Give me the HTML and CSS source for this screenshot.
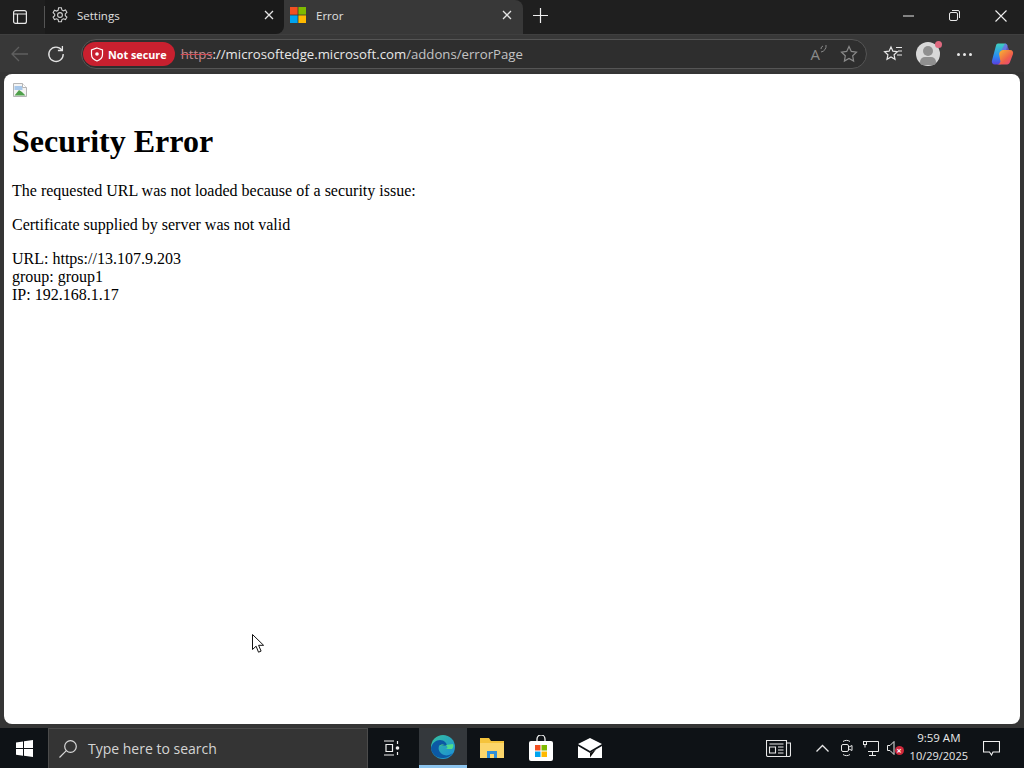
FILE: index.html
```html
<!DOCTYPE html>
<html lang="en">
<head>
  <meta charset="UTF-8" />
  <title>Error</title>
  <link rel="stylesheet" href="styles.css">
</head>
<body>
  <div class="tabbar">
    <div class="tabs-btn">
      <svg width="16" height="16" viewBox="0 0 16 16" fill="none" stroke="#e8e8e8" stroke-width="1.2"><rect x="1.6" y="1.6" width="12.8" height="12.8" rx="2"/><path d="M1.6 5h12.8M5.5 5v9.4"/></svg>
    </div>
    <div class="tab-sep"></div>
    <div class="tab tab-idle">
      <svg width="18" height="18" viewBox="0 0 18 18" fill="none" stroke="#d0d0d0" stroke-width="1.1"><path d="M7.6 1.8h2.8l.5 2.2 1.5.8 2.1-.8 1.4 2.4-1.6 1.5v1.8l1.6 1.5-1.4 2.4-2.1-.8-1.5.8-.5 2.2H7.6l-.5-2.2-1.5-.8-2.1.8-1.4-2.4 1.6-1.5V8.200L2.100 6.700 3.500 4.300l2.100.8 1.500-.8z"/><circle cx="9" cy="9" r="2.4"/></svg>
      <span class="tab-title">Settings</span>
      <svg class="tab-close" width="10" height="10" viewBox="0 0 10 10" stroke="#e4e4e4" stroke-width="1.3"><path d="M1 1l8 8M9 1l-8 8"/></svg>
    </div>
    <div class="tab tab-active">
      <svg width="16" height="16" viewBox="0 0 16 16"><rect width="7.600" height="7.600" fill="#f25022"/><rect x="8.400" width="7.600" height="7.600" fill="#7fba00"/><rect y="8.400" width="7.600" height="7.600" fill="#00a4ef"/><rect x="8.400" y="8.400" width="7.600" height="7.600" fill="#ffb900"/></svg>
      <span class="tab-title">Error</span>
      <svg class="tab-close" width="10" height="10" viewBox="0 0 10 10" stroke="#e4e4e4" stroke-width="1.3"><path d="M1 1l8 8M9 1l-8 8"/></svg>
    </div>
    <div class="new-tab">
      <svg width="15" height="15" viewBox="0 0 15 15" stroke="#efefef" stroke-width="1.200"><path d="M7.500 0v15M0 7.500h15"/></svg>
    </div>
    <div class="win-btns">
      <svg width="11" height="11" viewBox="0 0 11 11" stroke="#e8e8e8"><path d="M0 6h11"/></svg>
      <svg width="11" height="11" viewBox="0 0 11 11" fill="none" stroke="#e8e8e8"><rect x=".5" y="2.500" width="8" height="8" rx="1.500"/><path d="M3 .5h6a1.500 1.500 0 0 1 1.500 1.500v6"/></svg>
      <svg width="12" height="12" viewBox="0 0 12 12" stroke="#efefef" stroke-width="1.100"><path d="M.5.500l11 11M11.500.500l-11 11"/></svg>
    </div>
  </div>

  <div class="toolbar">
    <svg class="nav-back" width="18" height="16" viewBox="0 0 18 16" fill="none" stroke="#5f5f5f" stroke-width="1.300"><path d="M17 8H1M8 1L1 8l7 7"/></svg>
    <svg class="nav-reload" width="18" height="18" viewBox="0 0 18 18" fill="none" stroke="#e4e4e4" stroke-width="1.300"><path d="M14.800 5A7.200 7.200 0 1 0 16.200 9"/><path d="M15.400 1v4.500h-4.500"/></svg>
    <div class="addressbar">
      <div class="not-secure">
        <svg width="14" height="15" viewBox="0 0 14 15" fill="none" stroke="#fff" stroke-width="1.200"><path d="M7 1l5.500 2v4.500c0 3-2.300 5.300-5.500 6.500-3.200-1.200-5.500-3.500-5.500-6.500V3z"/><circle cx="7" cy="7" r="1.800" fill="#fff" stroke="none"/></svg>
        <span>Not secure</span>
      </div>
      <div class="url"><span class="url-https">https</span>://microsoftedge.microsoft.com<span class="url-path">/addons/errorPage</span></div>
      <span class="read-aloud">A<svg width="8" height="9" viewBox="0 0 8 9" fill="none" stroke="#8a8a8a"><path d="M1 5a3 3 0 0 1 2-3M1 8a6 6 0 0 0 5-7"/></svg></span>
      <svg width="18" height="18" viewBox="0 0 18 18" fill="none" stroke="#8a8a8a" stroke-width="1.200"><path d="M9 1.500l2.300 4.900 5.200.7-3.800 3.700.9 5.300L9 13.500l-4.600 2.600.9-5.300L1.500 7.100l5.200-.7z"/></svg>
    </div>
    <svg class="tool-fav" width="20" height="18" viewBox="0 0 20 18" fill="none" stroke="#e8e8e8" stroke-width="1.200"><path d="M8 2l1.900 4.200 4.500.5-3.300 3.100.9 4.500L8 12l-4 2.300.9-4.500L1.600 6.700l4.500-.5z"/><path d="M13 2.500h6M15 6h4M14 10h5"/></svg>
    <div class="avatar">
      <span class="avatar-head"></span>
      <span class="avatar-body"></span>
      <span class="avatar-dot"></span>
    </div>
    <div class="more-dots"><span></span><span></span><span></span></div>
    <svg class="copilot" width="24" height="24" viewBox="0 0 24 24"><defs><linearGradient id="cpA" x1="0" y1="0" x2="0" y2="1"><stop offset="0" stop-color="#3fd0c0"/><stop offset=".6" stop-color="#2a8cf0"/><stop offset="1" stop-color="#5a3fe0"/></linearGradient><linearGradient id="cpB" x1="0" y1="0" x2="1" y2="1"><stop offset="0" stop-color="#f9c22e"/><stop offset=".6" stop-color="#f0604a"/><stop offset="1" stop-color="#e0408a"/></linearGradient></defs><path d="M8 1.500h7c1.500 0 2 1 2.400 2L13 20c-.4 1.300-1.500 2.500-2.800 2.500H5c-2.500 0-3.700-2-3-4L6 3.500c.3-1.200 1-2 2-2z" fill="url(#cpA)"/><path d="M9 12c1-3 2-4 4-4h7c2.500 0 3.500 2 3 4l-3 8c-.5 1.300-1.500 2.500-3 2.500H7c2 0 3-1 3.500-3z" fill="url(#cpB)"/><path d="M15 1.500c1.500 0 2 1 2.400 2L19 8h-6c-1 0-2 .5-2.500 2z" fill="#7a5fe8" opacity=".7"/></svg>
  </div>

  <main class="page">
    <span class="broken-img">
      <svg width="16" height="16" viewBox="0 0 16 16"><path d="M1.500 1.500h9l4 4v9h-13z" fill="#f4f4f4" stroke="#b5b5b5"/><path d="M2.500 4h8v4h-8z" fill="#a8c8ea"/><path d="M2.500 13.500L7 8l3 2 3.500 3.500z" fill="#4fa04a"/><path d="M10.500 1.500v4h4" fill="#fff" stroke="#b5b5b5"/></svg>
    </span>
    <h1>Security Error</h1>
    <p>The requested URL was not loaded because of a security issue:</p>
    <p>Certificate supplied by server was not valid</p>
    <p>URL: https://13.107.9.203<br>group: group1<br>IP: 192.168.1.17</p>
    <svg class="cursor" width="13" height="20" viewBox="0 0 13 20"><path d="M.5.500v15l3.600-3.300 2.400 6 2.600-1.100-2.500-5.800h5z" fill="#fff" stroke="#111"/></svg>
  </main>

  <div class="taskbar">
    <div class="start">
      <svg width="17" height="17" viewBox="0 0 17 17" fill="#fff"><path d="M0 2.400l7-1v6.700H0zM8 1.300L17 0v8.100H8zM0 9h7v6.700l-7-1zM8 9h9v8l-9-1.300z"/></svg>
    </div>
    <div class="search">
      <svg width="20" height="20" viewBox="0 0 20 20" fill="none" stroke="#d8d8d8" stroke-width="1.200"><circle cx="12.500" cy="7.500" r="5.800"/><path d="M8.300 11.700L1.500 18.500"/></svg>
      <span>Type here to search</span>
    </div>
    <div class="task-item task-view">
      <svg width="18" height="16" viewBox="0 0 18 16" fill="none" stroke="#f0f0f0" stroke-width="1.200"><path d="M1 1h10M1 15h10M3 4.500h6.500v7H3zM14.500 1v3M14.500 12v3"/><circle cx="14.500" cy="8" r="1.800" fill="#f0f0f0" stroke="none"/></svg>
    </div>
    <div class="task-item task-active">
      <svg width="26" height="26" viewBox="0 0 26 26"><defs><linearGradient id="edA" x1="0" y1="0" x2="1" y2="1"><stop offset="0" stop-color="#35c1a0"/><stop offset="1" stop-color="#1b8bd8"/></linearGradient></defs><circle cx="13" cy="13" r="12" fill="url(#edA)"/><path d="M1 14c1-5 5-8 9-8s7 3 7 6H9c-1 3 0 7 5 9 3 1 6 0 9-2-3 4-7 5-11 5-6 0-11-5-11-10z" fill="#0c59a4"/><path d="M9 12c2-2 5-2 8 0 1 2 0 3-2 3h7c1-1 2-3 1-5" fill="#4fdc8c"/></svg>
    </div>
    <div class="task-item">
      <svg width="24" height="20" viewBox="0 0 24 20"><path d="M0 0h9l2 3h13v17H0z" fill="#f5c33b"/><path d="M0 5h24v15H0z" fill="#fbd56a"/><path d="M7 20v-7h10v7h-3v-4h-4v4z" fill="#2f8ed8"/></svg>
    </div>
    <div class="task-item">
      <svg width="24" height="26" viewBox="0 0 24 26"><path d="M8 7V4a4 4 0 0 1 8 0v3" fill="none" stroke="#fff" stroke-width="1.200"/><rect y="6" width="24" height="20" rx="2" fill="#fff"/><rect x="6" y="10" width="5.500" height="5.500" fill="#f25022"/><rect x="12.500" y="10" width="5.500" height="5.500" fill="#7fba00"/><rect x="6" y="16.500" width="5.500" height="5.500" fill="#00a4ef"/><rect x="12.500" y="16.500" width="5.500" height="5.500" fill="#ffb900"/></svg>
    </div>
    <div class="task-item">
      <svg width="24" height="20" viewBox="0 0 24 20"><path d="M0 6l12-6 12 6-12 7z" fill="#fff"/><path d="M0 8l12 7 12-7v12H0z" fill="#fff"/><path d="M12 15l6-3.500-6 8z" fill="#111"/></svg>
    </div>
    <div class="tray">
      <svg class="tray-news" width="25" height="17" viewBox="0 0 25 17" fill="none" stroke="#e8e8e8" stroke-width="1.100"><path d="M.5.500h20v16H2a1.500 1.500 0 0 1-1.500-1.500zM20.500 3h4v12a1.500 1.500 0 0 1-1.500 1.500h-2.500"/><path d="M3.500 4h14M3.500 7h6v6h-6zM12 7h5.500M12 10h5.500M12 13h5.500"/></svg>
      <svg class="tray-up" width="13" height="8" viewBox="0 0 13 8" fill="none" stroke="#e8e8e8" stroke-width="1.300"><path d="M.5 7.500l6-6 6 6"/></svg>
      <svg class="tray-cam" width="12" height="18" viewBox="0 0 12 18" fill="none" stroke="#e8e8e8"><rect x=".5" y="5.500" width="7" height="7" rx="1.500"/><path d="M8 8l3-1.500v5L8 10M2 2.500c2-1.500 5-1.500 7 0M2 15.500c2 1.500 5 1.500 7 0"/></svg>
      <svg width="16" height="16" viewBox="0 0 16 16" fill="none" stroke="#e8e8e8"><path d="M3.500 1.500h12v10H5M9.500 11.500v3.500M6 15.500h7"/><rect x=".5" y="1.500" width="3" height="3"/><path d="M2 4.500v3"/></svg>
      <span class="tray-volume">
        <svg width="9" height="14" viewBox="0 0 9 14" fill="none" stroke="#e8e8e8"><path d="M.5 4.500h2.500l4-4v13l-4-4H.5z"/></svg>
        <span class="mute-badge">×</span>
      </span>
      <div class="clock"><span class="clock-time">9:59 AM</span><span>10/29/2025</span></div>
      <svg class="tray-note" width="17" height="15" viewBox="0 0 17 15" fill="none" stroke="#f0f0f0" stroke-width="1.100"><path d="M.5.500h16v10.500h-6.500L8.500 14l-2-3H.5z"/></svg>
    </div>
  </div>
</body>
</html>
```

FILE: styles.css
```css
html, body {
  margin: 0;
  padding: 0;
}
body {
  width: 1024px;
  height: 768px;
  overflow: hidden;
  background-color: #353535;
  font-family: "Open Sans", "Noto Sans", sans-serif;
  display: flex;
  flex-direction: column;
}
svg {
  display: block;
  flex-shrink: 0;
}

/* tab strip */
.tabbar {
  height: 34px;
  background-color: #1f1f1f;
  display: flex;
  align-items: center;
  border-bottom: 1px solid #3f3f3f;
}
.tabs-btn {
  width: 40px;
  display: flex;
  justify-content: center;
}
.tab-sep {
  width: 1px;
  height: 22px;
  background-color: #555;
  margin-left: 4px;
}
.tab {
  height: 34px;
  box-sizing: border-box;
  display: flex;
  align-items: center;
  font-size: 11.5px;
  color: #e0e0e0;
  padding-bottom: 4px;
}
.tab-idle {
  position: relative;
  z-index: 1;
  width: 239px;
  padding-left: 6px;
  padding-right: 10px;
  background-color: #1a1a1a;
  border-bottom-right-radius: 8px;
}
.tab-active {
  width: 247px;
  margin-left: -8px;
  background-color: #383838;
  border-radius: 8px 8px 0 0;
  padding-left: 14px;
  padding-right: 11px;
}
.tab-title {
  margin-left: 8px;
  flex: 1;
}
.tab-active .tab-title {
  margin-left: 10px;
}
.new-tab {
  margin-left: 10px;
  margin-top: -3px;
}
.win-btns {
  margin-left: auto;
  display: flex;
  align-items: center;
  gap: 35px;
  padding: 0 17px 3px 0;
}

/* address row */
.toolbar {
  height: 37px;
  box-sizing: border-box;
  padding-top: 1px;
  background-color: #383838;
  display: flex;
  align-items: center;
}
.nav-back {
  margin-left: 11px;
}
.nav-reload {
  margin-left: 18px;
}
.addressbar {
  margin-left: 16px;
  width: 786px;
  height: 30px;
  box-sizing: border-box;
  border: 1px solid #555;
  border-radius: 15px;
  background-color: #2e2e2e;
  display: flex;
  align-items: center;
  padding-right: 8px;
}
.not-secure {
  height: 24px;
  margin-left: 1px;
  padding: 0 8px 0 7px;
  border-radius: 12px;
  background-color: #c8202f;
  color: #fff;
  font-size: 10.8px;
  font-weight: 700;
  display: flex;
  align-items: center;
  gap: 4px;
}
.url {
  margin-left: 6px;
  font-size: 13.2px;
  color: #e8e8e8;
  flex: 1;
  white-space: nowrap;
}
.url-https {
  color: #c48a90;
  text-decoration: line-through;
  text-decoration-color: #d04a55;
}
.url-path {
  color: #c4c4c4;
}
.read-aloud {
  display: flex;
  align-items: flex-start;
  font-size: 15px;
  color: #8a8a8a;
  margin-right: 12px;
}
.tool-fav {
  margin-left: 16px;
}
.avatar {
  position: relative;
  width: 24px;
  height: 24px;
  margin-left: 13px;
  border-radius: 50%;
  background-color: #d8d8d8;
}
.avatar-head {
  position: absolute;
  left: 7px;
  top: 4px;
  width: 10px;
  height: 10px;
  border-radius: 50%;
  background-color: #8f8f8f;
}
.avatar-body {
  position: absolute;
  left: 4px;
  top: 15px;
  width: 16px;
  height: 8px;
  border-radius: 8px 8px 5px 5px;
  background-color: #8f8f8f;
}
.avatar-dot {
  position: absolute;
  right: -2px;
  top: -1px;
  width: 7px;
  height: 7px;
  border-radius: 50%;
  background-color: #e06a80;
}
.more-dots {
  margin-left: 17px;
  display: flex;
  gap: 3px;
}
.more-dots span {
  width: 3px;
  height: 3px;
  border-radius: 50%;
  background-color: #e8e8e8;
}
.copilot {
  margin-left: 18px;
}

/* page content */
.page {
  position: relative;
  height: 634px;
  margin: 2px 4px 0;
  padding: 8px;
  background-color: #fff;
  border-radius: 8px;
  font-family: "Liberation Serif", serif;
  font-size: 16px;
  color: #000;
}
.broken-img {
  display: inline-block;
  width: 16px;
  height: 16px;
  vertical-align: baseline;
}
.page h1 {
  font-size: 32px;
  margin: 21px 0 22px;
}
.page p {
  margin: 16px 0;
}
.cursor {
  position: absolute;
  left: 248px;
  top: 560px;
}

/* windows taskbar */
.taskbar {
  margin-top: 4px;
  height: 40px;
  background-color: #0e1216;
  display: flex;
  align-items: center;
}
.start {
  width: 48px;
  display: flex;
  justify-content: center;
}
.search {
  width: 320px;
  height: 40px;
  box-sizing: border-box;
  background-color: #343434;
  border: 1px solid #4b4b4b;
  border-bottom: 0;
  display: flex;
  align-items: center;
  padding-left: 9px;
  gap: 10px;
  font-size: 14px;
  color: #d4d4d4;
}
.task-item {
  width: 49px;
  height: 40px;
  box-sizing: border-box;
  display: flex;
  align-items: center;
  justify-content: center;
}
.task-view {
  width: 51px;
  padding-right: 3px;
}
.task-active {
  width: 48px;
  background-color: #34383c;
  border-bottom: 3px solid #8cc4ee;
}
.tray {
  margin-left: auto;
  display: flex;
  align-items: center;
  gap: 8px;
  padding-right: 24px;
}
.tray-news {
  margin-right: 17px;
}
.tray-up {
  margin-right: 4px;
}
.tray-cam {
  margin-right: 2px;
}
.tray-volume {
  position: relative;
  width: 14px;
  height: 14px;
}
.mute-badge {
  position: absolute;
  left: 8px;
  top: 5px;
  width: 9px;
  height: 9px;
  border-radius: 50%;
  background-color: #d0283c;
  color: #fff;
  font-size: 9px;
  line-height: 9px;
  font-weight: 700;
  text-align: center;
}
.clock {
  display: flex;
  flex-direction: column;
  align-items: center;
  font-size: 11px;
  line-height: 18px;
  color: #e8e8e8;
  margin-left: 1px;
  padding-bottom: 2px;
}
.clock-time {
  font-size: 11.5px;
}
.tray-note {
  margin-left: 7px;
}
```
